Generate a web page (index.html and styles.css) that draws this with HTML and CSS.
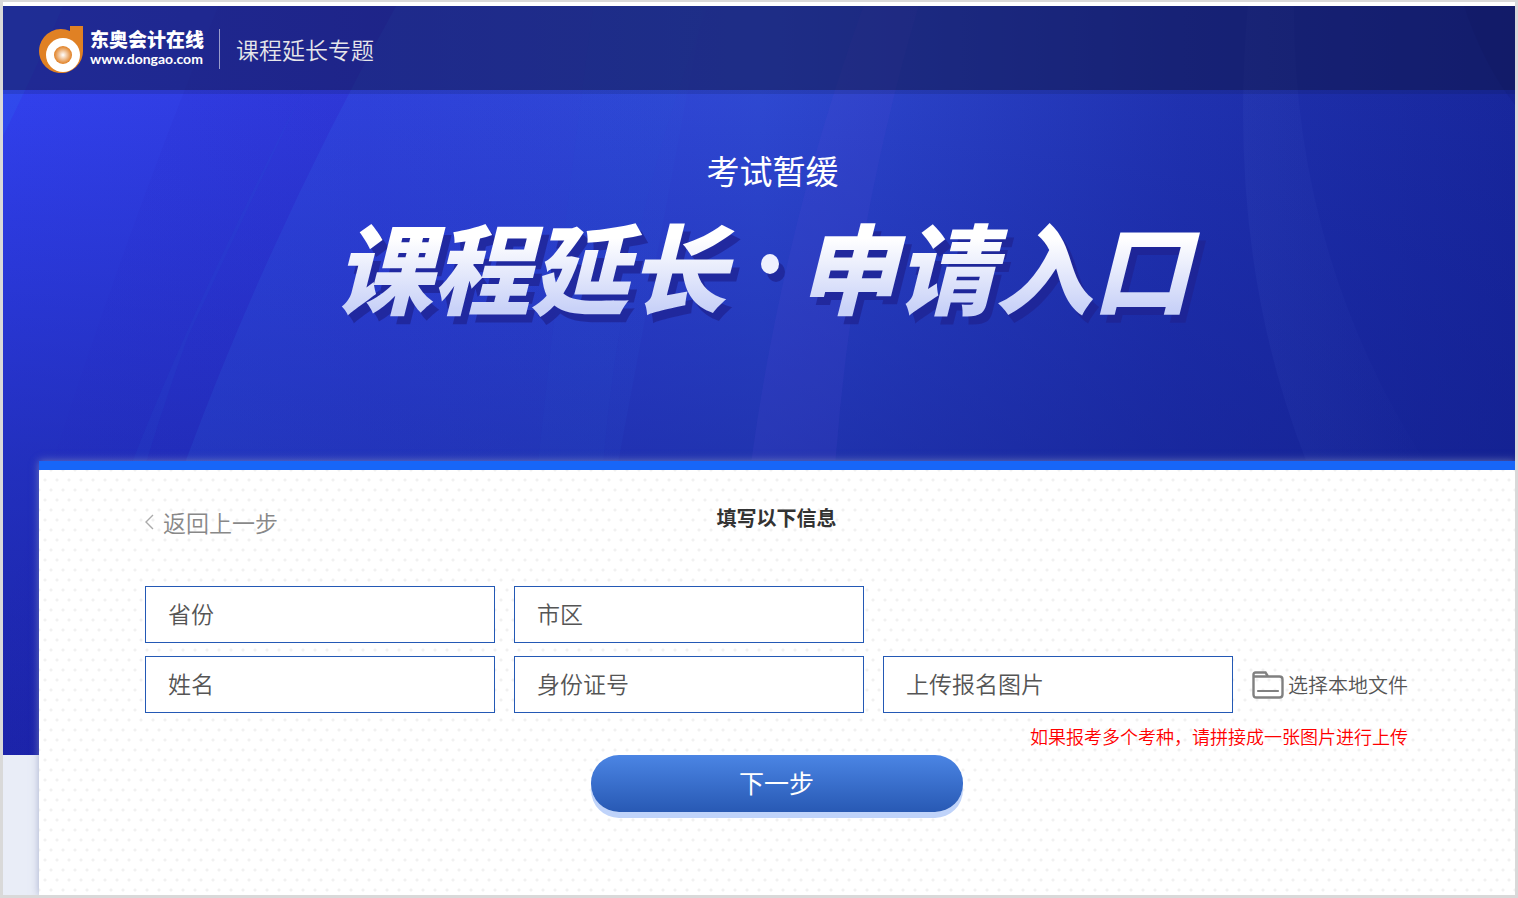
FILE: index.html
```html
<!DOCTYPE html>
<html lang="zh-CN">
<head>
  <meta charset="UTF-8" />
  <meta name="viewport" content="width=device-width, initial-scale=1" />
  <title>课程延长专题</title>
  <link rel="stylesheet" href="styles.css">
</head>
<body>

  <div class="page">
    <svg class="backdrop" viewBox="0 0 1512 749" preserveAspectRatio="none" aria-hidden="true">
      <defs>
        <linearGradient id="base" x1="0" y1="0" x2="1" y2="0">
          <stop offset="0" stop-color="#3241ee" />
          <stop offset="0.24" stop-color="#303ddc" />
          <stop offset="0.5" stop-color="#2f49d2" />
          <stop offset="0.78" stop-color="#2032b0" />
          <stop offset="1" stop-color="#18279c" />
        </linearGradient>
        <linearGradient id="shade" x1="0" y1="0" x2="0" y2="1">
          <stop offset="0.1" stop-color="#0c1690" stop-opacity="0" />
          <stop offset="0.6" stop-color="#101c88" stop-opacity="0.46" />
          <stop offset="1" stop-color="#161c98" stop-opacity="0.8" />
        </linearGradient>
        <linearGradient id="ray" x1="0" y1="0" x2="1" y2="0">
          <stop offset="0" stop-color="#2b5cd8" stop-opacity="0.2" />
          <stop offset="1" stop-color="#2b5cd8" stop-opacity="0.08" />
        </linearGradient>
        <linearGradient id="dark" x1="0" y1="0" x2="1" y2="0">
          <stop offset="0" stop-color="#2418b8" stop-opacity="0" />
          <stop offset="1" stop-color="#2418b8" stop-opacity="0.16" />
        </linearGradient>
        <linearGradient id="arc" x1="0" y1="0" x2="1" y2="0">
          <stop offset="0" stop-color="#4a62d0" stop-opacity="0.11" />
          <stop offset="1" stop-color="#4a62d0" stop-opacity="0.01" />
        </linearGradient>
      </defs>
      <rect width="1512" height="749" fill="url(#base)" />
      <rect width="1512" height="749" fill="url(#shade)" />
      <path d="M0 0H60Q25 80 0 130Z" fill="#2f6af0" fill-opacity="0.22" />
      <path d="M215 0H393Q270 220 183 454L120 749H-40Q80 330 215 0Z" fill="url(#dark)" />
      <path d="M393 0Q270 220 183 454L120 749H560L700 0Z" fill="url(#ray)" />
      <path d="M300 84Q190 300 130 454L40 749H70Q110 540 185 330Z" fill="#2b62d8" fill-opacity="0.1" />
      <path d="M590 0Q560 220 535 454H600Q620 220 705 0Z" fill="#2b62d8" fill-opacity="0.05" />
      <path d="M860 0Q780 220 748 454H832Q850 220 915 0Z" fill="#5a50d8" fill-opacity="0.13" />
      <path d="M1244 0Q1222 250 1302 454H1420Q1290 250 1290 0Z" fill="url(#arc)" />
      <path d="M1460 0Q1480 60 1512 100V0Z" fill="#0c1670" fill-opacity="0.15" />
    </svg>

    <header class="header">
      <a class="logo" href="#">
        <svg width="45" height="48" viewBox="0 0 45 48" aria-hidden="true">
          <defs>
            <radialGradient id="core">
              <stop offset="0" stop-color="#fff" />
              <stop offset="1" stop-color="#e07f22" />
            </radialGradient>
          </defs>
          <path d="M31 1H44V25A22 22 0 1 1 31 6Z" fill="#e08124" />
          <circle cx="24" cy="30" r="17" fill="#fff" />
          <circle cx="24" cy="30" r="9" fill="url(#core)" />
        </svg>
        <span class="logo-text">
          <span class="logo-name">东奥会计在线</span>
          <span class="logo-url">www.dongao.com</span>
        </span>
      </a>
      <span class="header-title">课程延长专题</span>
    </header>

    <section class="banner">
      <p class="banner-sub">考试暂缓</p>
      <h1 class="banner-title"><span>课程延长</span><i class="dot"></i><span>申请入口</span></h1>
    </section>

    <main class="panel">
      <div class="panel-head">
        <a class="back" href="#">
          <svg width="9" height="16" viewBox="0 0 9 16" aria-hidden="true">
            <path d="M8 1L1 8L8 15" fill="none" stroke="#aaa" stroke-width="1.4" />
          </svg>
          返回上一步
        </a>
        <h2>填写以下信息</h2>
      </div>

      <form class="form" onsubmit="return false;">
        <div class="row">
          <input type="text" name="province" placeholder="省份" aria-label="省份" />
          <input type="text" name="city" placeholder="市区" aria-label="市区" />
        </div>
        <div class="row">
          <input type="text" name="name" placeholder="姓名" aria-label="姓名" />
          <input type="text" name="idcard" placeholder="身份证号" aria-label="身份证号" />
          <input type="text" id="fileName" placeholder="上传报名图片" aria-label="上传报名图片" readonly />
          <label class="upload" for="file">
            <svg width="32" height="28" viewBox="0 0 32 28" aria-hidden="true">
              <path d="M1.5 6V3.500Q1.500 1.500 3.500 1.500H13.500L16 5.500H27.500Q30.500 5.500 30.500 8.500V23.500Q30.500 26.500 27.500 26.500H4.500Q1.500 26.500 1.500 23.500V5.500H16" fill="none" stroke="#808080" stroke-width="2.4" />
              <path d="M6 20H26" stroke="#808080" stroke-width="2.2" stroke-linecap="round" />
            </svg>
            选择本地文件
          </label>
          <input type="file" id="file" accept="image/*" hidden />
        </div>
        <p class="tip">如果报考多个考种，请拼接成一张图片进行上传</p>
        <button type="submit">下一步</button>
      </form>
    </main>
  </div>

  <script>
    document.getElementById('file').addEventListener('change', function () {
      document.getElementById('fileName').value = this.files.length ? this.files[0].name : '';
    });
  </script>

</body>
</html>
```
FILE: styles.css
```css
* {
  box-sizing: border-box;
}
body {
  margin: 0;
  min-height: 100vh;
  display: flex;
  padding-top: 4px;
  border: 3px solid #d9d9d9;
  border-top-width: 2px;
  background: white;
  font-family: "Noto Sans CJK SC", sans-serif;
  font-weight: 350;
  color: #555;
}
.page {
  position: relative;
  flex: 1;
  display: flex;
  flex-direction: column;
  background: #e9edf7;
}
.backdrop {
  position: absolute;
  top: 0;
  left: 0;
  width: 100%;
  height: 749px;
}
.header,
.banner,
.panel {
  position: relative;
}
.header {
  display: flex;
  align-items: center;
  height: 84px;
  padding: 2px 36px 0;
  background: rgba(14, 18, 60, 0.5);
  box-shadow: 0 4px 0 rgba(14, 22, 70, 0.16);
}
.logo {
  display: flex;
  align-items: center;
  gap: 6px;
  color: white;
  text-decoration: none;
}
.logo-text {
  display: flex;
  flex-direction: column;
}
.logo-name {
  font-size: 19px;
  line-height: 20px;
  font-weight: 900;
}
.logo-url {
  font-family: Lato, sans-serif;
  font-size: 14px;
  line-height: 20px;
  font-weight: 700;
}
.header-title {
  margin-left: 15px;
  padding-left: 16px;
  border-left: 1px solid rgba(255, 255, 255, 0.55);
  font-size: 23px;
  line-height: 40px;
  color: #e6e6ea;
}
.banner {
  height: 371px;
  padding-top: 56px;
  padding-left: 26px;
  text-align: center;
}
.banner-sub {
  margin: 0;
  font-size: 33px;
  line-height: 48px;
  font-weight: 400;
  color: white;
}
.banner-title {
  display: flex;
  justify-content: center;
  align-items: center;
  margin: 6px 0 0;
  font-size: 98px;
  line-height: 128px;
  font-weight: 900;
  font-style: italic;
  filter: drop-shadow(6px 8px 0 rgba(31, 35, 145, 0.75));
}
.banner-title span {
  padding-right: 20px;
  background: linear-gradient(white 30%, #c9d2f8 85%);
  -webkit-background-clip: text;
  background-clip: text;
  color: transparent;
}
.dot {
  width: 18px;
  height: 20px;
  margin: 0 20px 0 14px;
  border-radius: 50%;
  background: #eef0fe;
}
.panel {
  flex: 1;
  margin-left: 36px;
  padding: 32px 108px 40px 106px;
  border-top: 9px solid #1766f8;
  background-color: white;
  background-image:
    radial-gradient(circle, #f1f1f1 1px, transparent 2px),
    radial-gradient(circle, #f1f1f1 1px, transparent 2px);
  background-size: 12px 20px;
  background-position: 0 0, 6px 10px;
  box-shadow: 0 0 8px rgba(140, 150, 190, 0.7);
}
.panel-head {
  display: grid;
  grid-template-columns: 1fr auto 1fr;
}
.panel-head h2 {
  margin: 0;
  font-size: 20px;
  line-height: 32px;
  font-weight: 700;
  color: #333;
}
.back {
  display: flex;
  align-items: center;
  gap: 9px;
  font-size: 23px;
  line-height: 40px;
  color: #888;
  text-decoration: none;
}
.form {
  margin-top: 44px;
}
.row {
  display: flex;
  align-items: center;
  gap: 19px;
  margin-bottom: 13px;
}
input[type="text"] {
  width: 350px;
  height: 57px;
  padding: 0 22px 4px;
  border: 1px solid #2459b5;
  background: white;
  font-family: inherit;
  font-size: 23px;
  font-weight: 350;
  color: #333;
}
input::placeholder {
  color: #555;
}
input:focus {
  outline: 1px solid #1766f8;
}
.upload {
  display: flex;
  align-items: center;
  gap: 4px;
  margin-left: auto;
  font-size: 20px;
  white-space: nowrap;
  cursor: pointer;
}
.tip {
  margin: 0;
  font-size: 18px;
  line-height: 20px;
  text-align: right;
  color: #f00;
}
button {
  display: block;
  width: 372px;
  height: 57px;
  margin: 9px auto 0;
  padding: 0 0 4px;
  border: none;
  border-radius: 28px;
  background: linear-gradient(#4b85e4, #2859b4);
  box-shadow: 0 6px 0 #bfd3fa;
  font-family: inherit;
  font-size: 25px;
  font-weight: 400;
  color: white;
  cursor: pointer;
}
```
